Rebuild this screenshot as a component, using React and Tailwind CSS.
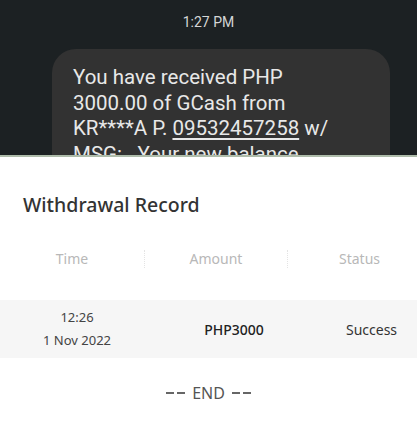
function Dashes() {
  return (
    <div className="flex gap-[3px]">
      <div className="w-[8px] h-[1.5px] bg-[#666]"></div>
      <div className="w-[8px] h-[1.5px] bg-[#666]"></div>
    </div>
  );
}

export default function App() {
  return (
    <div className="w-[417px] h-[428px] bg-white overflow-hidden flex flex-col">
      <div className="h-[155px] bg-[#1c2123] flex flex-col items-center overflow-hidden shrink-0" style={{ fontFamily: "Roboto, sans-serif" }}>
        <div className="mt-[13px] text-[14px] leading-[18px] text-[#d4d6d6]">1:27 PM</div>
        <div className="mt-[18px] w-[338px] rounded-[24px] bg-[#323232] pl-[21px] pt-[16px] pb-4 text-[20.5px] leading-[25.5px] text-[#e8e8e8] self-start ml-[52px]">
          <div>You have received PHP</div>
          <div>3000.00 of GCash from</div>
          <div>KR****A P. <span className="underline underline-offset-[3px]">09532457258</span> w/</div>
          <div>MSG: . Your new balance</div>
        </div>
      </div>
      <div className="h-[2px] bg-[#aebcaa] shrink-0"></div>
      <div className="flex-1 bg-white" style={{ fontFamily: "'Noto Sans', sans-serif" }}>
        <div className="pl-[23px] pt-[34px] text-[19.5px] leading-[27px] font-medium text-[#333333]">Withdrawal Record</div>
        <div className="mt-[31px] grid grid-cols-[145px_143px_129px] items-center text-[14px] text-[#b8b8b8] h-[20px]">
          <div className="text-center border-r border-dotted border-[#e4e4e4] h-[18px] leading-[18px]">Time</div>
          <div className="text-center border-r border-dotted border-[#e4e4e4] h-[18px] leading-[18px]">Amount</div>
          <div className="text-center pl-[14px] leading-[18px]">Status</div>
        </div>
        <div className="mt-[31px] h-[58px] bg-[#f6f6f6] grid grid-cols-[154px_160px_103px] items-center text-[#333333]">
          <div className="flex flex-col items-center text-[13px] leading-[23px] text-[#444]">
            <div>12:26</div>
            <div>1 Nov 2022</div>
          </div>
          <div className="text-center text-[14px] font-medium text-[#222]">PHP3000</div>
          <div className="text-center pl-[12px] text-[14px] text-[#333]">Success</div>
        </div>
        <div className="mt-[25px] flex justify-center items-center gap-[7px] text-[16px] leading-[20px] text-[#555]">
          <Dashes />
          <span>END</span>
          <Dashes />
        </div>
      </div>
    </div>
  );
}
